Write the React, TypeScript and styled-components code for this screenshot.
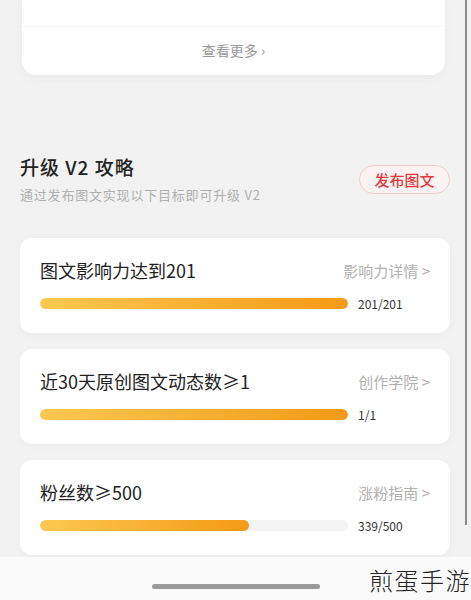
import styled, { createGlobalStyle } from "styled-components";

const GlobalStyle = createGlobalStyle`
  body {
    margin: 0;
    background: #f2f2f2;
    font-family: "Noto Sans CJK SC", "Noto Sans", sans-serif;
  }
`;

const Page = styled.div`
  position: relative;
  width: 471px;
  height: 600px;
  overflow: hidden;
  display: flex;
  flex-direction: column;
`;

const MoreCard = styled.div`
  margin: 0 26px 0 22px;
  height: 75px;
  background: #fff;
  border-radius: 0 0 14px 14px;
  box-shadow: 0 4px 10px rgba(0, 0, 0, 0.03);
  display: flex;
  flex-direction: column;
`;

const MoreLink = styled.div`
  margin-top: 26px;
  border-top: 1px solid #f6f6f6;
  flex: 1;
  display: flex;
  align-items: center;
  justify-content: center;
  font-size: 14px;
  color: #999;
  padding-bottom: 2px;
`;

const Header = styled.div`
  margin: 81px 21px 0 20px;
  display: flex;
  align-items: center;
  justify-content: space-between;
`;

const HeaderText = styled.div`
  display: flex;
  flex-direction: column;
`;

const Title = styled.div`
  font-size: 19px;
  font-weight: 500;
  color: #222;
  line-height: 22px;
  letter-spacing: 1px;
`;

const Subtitle = styled.div`
  margin-top: 9px;
  font-size: 13px;
  color: #b0b0b0;
  line-height: 16px;
  letter-spacing: 0.8px;
`;

const PublishButton = styled.button`
  width: 91px;
  height: 29px;
  border: 1px solid #f1cccc;
  border-radius: 15px;
  background: #fbf3f3;
  color: #e03a3e;
  font-family: inherit;
  font-size: 15px;
  font-weight: 500;
  padding: 0;
`;

const GoalList = styled.div`
  margin: 35px 21px 0 20px;
  display: flex;
  flex-direction: column;
  gap: 16px;
`;

const GoalCard = styled.div`
  height: 95px;
  box-sizing: border-box;
  background: #fff;
  border-radius: 12px;
  box-shadow: 0 2px 8px rgba(0, 0, 0, 0.03);
  padding: 20px 20px 0 20px;
`;

const GoalTop = styled.div`
  display: flex;
  align-items: center;
  justify-content: space-between;
  height: 24px;
`;

const GoalTitle = styled.div`
  font-size: 18px;
  color: #222;
`;

const GoalLink = styled.div`
  font-size: 15px;
  color: #b0b0b0;
`;

const ProgressRow = styled.div`
  margin-top: 13px;
  display: flex;
  align-items: center;
  gap: 10px;
`;

const Track = styled.div`
  width: 308px;
  height: 11px;
  border-radius: 6px;
  background: #f4f4f4;
  overflow: hidden;
`;

const Fill = styled.div`
  height: 100%;
  border-radius: 6px;
  background: linear-gradient(90deg, #fcc850, #f59a16);
`;

const Count = styled.div`
  font-size: 12px;
  color: #333;
`;

const BottomBar = styled.div`
  margin-top: 2px;
  flex: 1;
  background: #fafafa;
  display: flex;
  justify-content: center;
  padding-top: 27px;
`;

const HomeIndicator = styled.div`
  width: 168px;
  height: 5px;
  border-radius: 3px;
  background: #9a9a9a;
`;

const ScrollIndicator = styled.div`
  position: absolute;
  left: 465px;
  top: 0;
  width: 2px;
  height: 525px;
  background: #8d8d8d;
`;

const Watermark = styled.div`
  position: absolute;
  right: 0;
  bottom: 3px;
  font-size: 24px;
  font-weight: 300;
  color: #222;
  letter-spacing: 1.5px;
`;

const goals = [
  { title: "图文影响力达到201", link: "影响力详情", value: 201, total: 201 },
  { title: "近30天原创图文动态数≥1", link: "创作学院", value: 1, total: 1 },
  { title: "粉丝数≥500", link: "涨粉指南", value: 339, total: 500 },
];

export default function App() {
  return (
    <>
      <GlobalStyle />
      <Page>
        <MoreCard>
          <MoreLink>查看更多 ›</MoreLink>
        </MoreCard>
        <Header>
          <HeaderText>
            <Title>升级 V2 攻略</Title>
            <Subtitle>通过发布图文实现以下目标即可升级 V2</Subtitle>
          </HeaderText>
          <PublishButton>发布图文</PublishButton>
        </Header>
        <GoalList>
          {goals.map((g) => (
            <GoalCard key={g.title}>
              <GoalTop>
                <GoalTitle>{g.title}</GoalTitle>
                <GoalLink>{g.link} &gt;</GoalLink>
              </GoalTop>
              <ProgressRow>
                <Track>
                  <Fill style={{ width: `${(g.value / g.total) * 100}%` }} />
                </Track>
                <Count>
                  {g.value}/{g.total}
                </Count>
              </ProgressRow>
            </GoalCard>
          ))}
        </GoalList>
        <BottomBar>
          <HomeIndicator />
        </BottomBar>
        <ScrollIndicator />
        <Watermark>煎蛋手游</Watermark>
      </Page>
    </>
  );
}
